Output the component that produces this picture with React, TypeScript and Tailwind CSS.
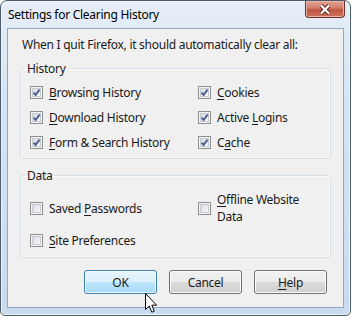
import React from "react";

const Key = ({ text, k }: { text: string; k: number }) => (
  <span>
    {text.slice(0, k)}
    <span className="underline underline-offset-2">{text[k]}</span>
    {text.slice(k + 1)}
  </span>
);

const Box = ({ checked }: { checked?: boolean }) => (
  <span className="flex h-[13px] w-[13px] shrink-0 items-center justify-center border border-[#8e8f8f] bg-[#f4f4f4]">
    <span className="relative flex h-[9px] w-[9px] items-center justify-center border border-[#c6cbd1] bg-[linear-gradient(135deg,#d6d9de_0%,#eceef0_60%,#f8f8f8_100%)]">
      {checked && (
        <svg width="11" height="11" viewBox="0 0 11 11" className="absolute -left-[2px] -top-[2px]">
          <path d="M2.6 5.6 L4.6 7.9 L8.6 2.6" fill="none" stroke="#4a5f8f" strokeWidth="1.9" />
        </svg>
      )}
    </span>
  </span>
);

const Check = ({ label, k, checked }: { label: React.ReactNode; k?: number; checked?: boolean }) => (
  <div className="flex h-full items-center gap-[6px]">
    <Box checked={checked} />
    {typeof label === "string" && k !== undefined ? <Key text={label} k={k} /> : label}
  </div>
);

const Btn = ({ children, primary }: { children: React.ReactNode; primary?: boolean }) => (
  <button
    className={
      primary
        ? "h-[24px] w-[73px] rounded-[3px] border border-[#3c7fb1] bg-[linear-gradient(#eaf6fd_0%,#d9f0fc_50%,#bee6fd_51%,#a7d9f5_100%)] shadow-[inset_0_0_0_1px_#f4fbff] text-[#1a1a1a]"
        : "h-[24px] w-[73px] rounded-[3px] border border-[#707070] bg-[linear-gradient(#f2f2f2_0%,#ebebeb_50%,#dddddd_51%,#cfcfcf_100%)] shadow-[inset_0_0_0_1px_#fbfbfb] text-[#1a1a1a]"
    }
  >
    {children}
  </button>
);

export default function App() {
  return (
    <div className="relative h-[326px] w-[352px] bg-white font-['Noto_Sans',sans-serif] text-[12px] leading-[15px] tracking-[-0.27px] text-[#1a1a1a]">
      <div className="flex h-[316px] w-[351px] flex-col rounded-t-[7px] rounded-b-[5px] border border-[#4d5b6d] bg-[linear-gradient(#e6eef8_0%,#d6e4f3_30%,#c8dbef_100%)] shadow-[inset_0_0_0_1px_#eef4fb]">
        <div className="flex h-[27px] items-start justify-between">
          <span className="pl-[7px] pt-[6px] text-black">Settings for Clearing History</span>
          <div className="mr-[5px] flex h-[17px] w-[40px] items-center justify-center rounded-b-[4px] border border-t-0 border-[#6e3026] bg-[linear-gradient(#e3a394_0%,#d27d69_45%,#c0533f_55%,#cc7460_100%)] shadow-[inset_0_0_0_1px_#eab3a6]">
            <svg width="14" height="11" viewBox="0 0 14 11">
              <path d="M3 1.5 L11 9.5 M11 1.5 L3 9.5" stroke="#5a241b" strokeWidth="4" />
              <path d="M3 1.5 L11 9.5 M11 1.5 L3 9.5" stroke="#ffffff" strokeWidth="2.2" />
            </svg>
          </div>
        </div>
        <div className="mx-[6px] mb-[7px] flex-1 border border-[#95a7bd] bg-[#f0f0f0]">
          <p className="pl-[14px] pt-[8px]">When I quit Firefox, it should automatically clear all:</p>

          <fieldset className="ml-[12px] mt-[9px] w-[311px] rounded-[3px] border border-[#d5dfe5] shadow-[inset_0_0_0_1px_#fafafa]">
            <legend className="ml-[4px] px-[2px]">History</legend>
            <div className="grid grid-cols-[168px_1fr] grid-rows-[25px_25px_25px] pb-[3px] pl-[9px] pt-[4px]">
              <Check label="Browsing History" k={0} checked />
              <Check label="Cookies" k={0} checked />
              <Check label="Download History" k={0} checked />
              <Check label="Active Logins" k={7} checked />
              <Check label="Form & Search History" k={0} checked />
              <Check label="Cache" k={1} checked />
            </div>
          </fieldset>

          <fieldset className="ml-[12px] mt-[9px] w-[311px] rounded-[3px] border border-[#d5dfe5] shadow-[inset_0_0_0_1px_#fafafa]">
            <legend className="ml-[4px] px-[2px]">Data</legend>
            <div className="grid grid-cols-[168px_1fr] grid-rows-[34px_30px] pb-[2px] pl-[9px] pt-[8px]">
              <Check label="Saved Passwords" k={6} />
              <Check
                label={
                  <span className="leading-[17px]">
                    <Key text="Offline Website" k={0} />
                    <br />
                    Data
                  </span>
                }
              />
              <Check label="Site Preferences" k={0} />
              <div />
            </div>
          </fieldset>

          <div className="mt-[12px] flex justify-end gap-[12px] pr-[16px]">
            <Btn primary>OK</Btn>
            <Btn>Cancel</Btn>
            <Btn>
              <Key text="Help" k={0} />
            </Btn>
          </div>
        </div>
      </div>

      <svg width="13" height="21" viewBox="0 0 13 21" className="absolute left-[145px] top-[293px]">
        <path
          d="M0.5 0.5 L0.5 16.5 L4.2 13 L6.8 19.2 L9.3 18.1 L6.8 12.2 L11.6 12.2 Z"
          fill="#ffffff"
          stroke="#000000"
          strokeWidth="1"
          strokeLinejoin="miter"
        />
      </svg>
    </div>
  );
}
